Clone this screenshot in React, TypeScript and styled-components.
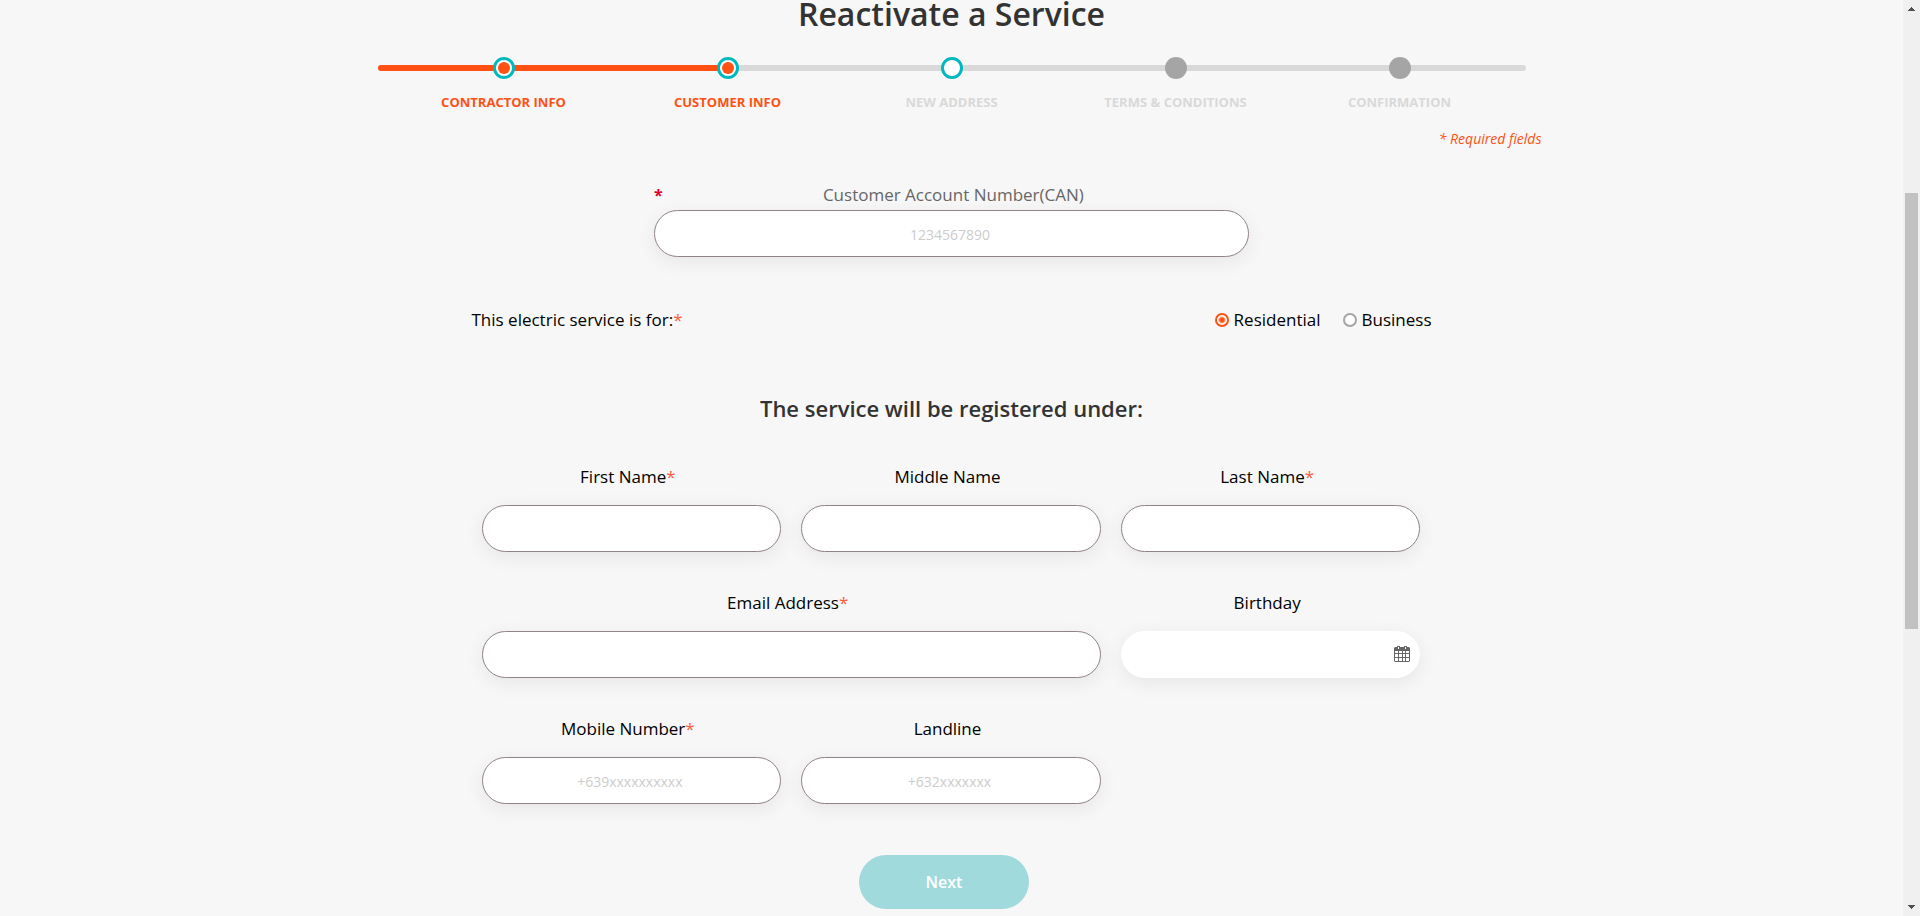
import React, { useState } from "react";
import styled, { createGlobalStyle, css } from "styled-components";

const colors = {
  page: "#f7f7f7",
  orange: "#ff5113",
  teal: "#00b8be",
  track: "#d9d9d9",
  marker: "#a5a5a5",
  border: "#918286",
};

const GlobalStyle = createGlobalStyle`
  *, *::before, *::after { box-sizing: border-box; }
  body {
    margin: 0;
    background: ${colors.page};
    color: #000;
    font: 400 17px/24px "Open Sans", "Noto Sans", sans-serif;
  }
  input, button { font-family: inherit; }
`;

const Shell = styled.div`
  display: grid;
  grid-template-columns: minmax(0, 1fr) 17px;
  min-height: 100vh;
`;

const Page = styled.main`
  width: 100%;
  max-width: 1180px;
  margin: 0 auto;
`;

const Title = styled.h1`
  margin: 0 0 29px;
  color: #333;
  font-size: 32px;
  font-weight: 600;
  line-height: 28px;
  text-align: center;
`;

const Progress = styled.nav`
  display: grid;
  margin: 0 16px;
`;

const Track = styled.div`
  grid-area: 1 / 1;
  height: 6px;
  margin-top: 8px;
  overflow: hidden;
  border-radius: 3px;
  background: ${colors.track};
`;

const TrackFill = styled.div`
  height: 100%;
  background: ${colors.orange};
`;

const StepList = styled.ol`
  grid-area: 1 / 1;
  display: grid;
  grid-template-columns: repeat(5, 1fr);
  z-index: 1;
  margin: 0;
  padding: 0 14px;
  list-style: none;
`;

type StepState = "done" | "current" | "todo";

const Step = styled.li<{ $state: StepState }>`
  display: flex;
  flex-direction: column;
  align-items: center;
  gap: 13px;
  color: ${(p) => (p.$state === "done" ? colors.orange : colors.track)};
  font-size: 13px;
  font-weight: 700;
  line-height: 20px;
  text-transform: uppercase;
`;

const Marker = styled.span<{ $state: StepState }>`
  display: grid;
  place-items: center;
  width: 22px;
  height: 22px;
  border: 3px solid ${(p) => (p.$state === "todo" ? colors.marker : colors.teal)};
  border-radius: 50%;
  background: ${(p) => (p.$state === "todo" ? colors.marker : "#fff")};
  ${(p) =>
    p.$state === "done" &&
    css`
      &::after {
        content: "";
        width: 12px;
        height: 12px;
        border-radius: 50%;
        background: ${colors.orange};
      }
    `}
`;

const RequiredNote = styled.p`
  margin: 17px 0 34px;
  color: ${colors.orange};
  font-size: 14px;
  font-style: italic;
  line-height: 20px;
  text-align: right;
`;

const Star = styled.span`
  color: #ff5a3c;
`;

const AccountField = styled.div`
  max-width: 595px;
  margin: 0 auto;
`;

const AccountLabel = styled.label`
  display: flex;
  margin-bottom: 3px;
  color: #666;
`;

const AccountStar = styled.span`
  color: #e4002b;
  font-size: 16px;
  font-weight: 700;
`;

const AccountText = styled.span`
  flex: 1;
  padding-right: 5px;
  text-align: center;
`;

const TextInput = styled.input<{ $plain?: boolean }>`
  display: block;
  width: 100%;
  height: 47px;
  padding: 2px 18px 0 15px;
  border: 1px solid ${(p) => (p.$plain ? "#fff" : colors.border)};
  border-radius: 24px;
  background: #fff;
  box-shadow: 0 5px 20px rgba(0, 0, 0, 0.07);
  color: #333;
  font-size: 14px;
  text-align: center;
  outline-color: ${colors.teal};
  &::placeholder {
    color: #ccc;
    opacity: 1;
  }
`;

const Form = styled.form`
  max-width: 960px;
  margin: 0 auto;
`;

const ServiceType = styled.div`
  display: flex;
  justify-content: space-between;
  margin: 51px 0 61px;
`;

const RadioGroup = styled.div`
  display: flex;
  gap: 22px;
`;

const RadioLabel = styled.label`
  display: flex;
  align-items: center;
  gap: 5px;
`;

const Radio = styled.input`
  appearance: none;
  width: 14px;
  height: 14px;
  margin: 0;
  border: 2px solid ${colors.marker};
  border-radius: 50%;
  background: #fff;
  &:checked {
    border-color: ${colors.orange};
    background: radial-gradient(circle, ${colors.orange} 2px, #fff 4px);
  }
`;

const SectionTitle = styled.h2`
  margin: 0 0 42px;
  color: #333;
  font-size: 22px;
  font-weight: 600;
  line-height: 30px;
  text-align: center;
`;

const Fields = styled.div`
  display: grid;
  grid-template-columns: repeat(3, minmax(0, 1fr));
  gap: 39px 20px;
  padding: 0 11px 0 10px;
`;

const FieldBox = styled.div<{ $span: number }>`
  grid-column: span ${(p) => p.$span};
`;

const FieldLabel = styled.label`
  display: block;
  margin-bottom: 16px;
  padding-right: 7px;
  text-align: center;
`;

const DateBox = styled.div`
  position: relative;
`;

const CalendarButton = styled.button`
  position: absolute;
  top: 15px;
  right: 10px;
  width: 16px;
  height: 16px;
  padding: 0;
  border: 0;
  background: none;
  svg { display: block; }
`;

const Actions = styled.div`
  display: flex;
  justify-content: center;
  margin-top: 51px;
  padding-right: 15px;
`;

const NextButton = styled.button`
  width: 170px;
  height: 54px;
  border: 0;
  border-radius: 27px;
  background: #a0dadd;
  color: #fff;
  font-size: 16px;
  font-weight: 600;
`;

const ScrollRail = styled.aside`
  position: sticky;
  top: 0;
  display: flex;
  flex-direction: column;
  align-items: center;
  height: 100vh;
  background: #f0f0f0;
`;

const ScrollArrow = styled.svg`
  flex: none;
  width: 17px;
  height: 17px;
  fill: #505050;
`;

const ScrollSpace = styled.div<{ $grow: number }>`
  flex: ${(p) => p.$grow} 0 0;
`;

const ScrollThumb = styled.div`
  flex: 436 0 0;
  width: 13px;
  background: #c1c1c1;
`;

const steps: { label: string; state: StepState }[] = [
  { label: "Contractor Info", state: "done" },
  { label: "Customer Info", state: "done" },
  { label: "New Address", state: "current" },
  { label: "Terms & Conditions", state: "todo" },
  { label: "Confirmation", state: "todo" },
];

const CalendarIcon = () => (
  <svg width="16" height="16" viewBox="0 0 16 16" aria-hidden="true">
    <path
      fill="#666"
      fillRule="evenodd"
      d="M1 1h2V0h3v1h4V0h3v1h2l1 1v13l-1 1H1l-1-1V2zM1 5v2h3V5zM5 5v2h3V5zM9 5v2h2V5zM12 5v2h3V5zM1 8v3h3V8zM5 8v3h3V8zM9 8v3h2V8zM12 8v3h3V8zM1 12v3h3v-3zM5 12v3h3v-3zM9 12v3h2v-3zM12 12v3h3v-3zM4 1v2h1V1zM11 1v2h1V1z"
    />
  </svg>
);

type FieldProps = {
  id: string;
  label: string;
  required?: boolean;
  span?: number;
  placeholder?: string;
  type?: string;
};

const Field = ({ id, label, required, span = 1, placeholder, type = "text" }: FieldProps) => (
  <FieldBox $span={span}>
    <FieldLabel htmlFor={id}>
      {label}
      {required && <Star>*</Star>}
    </FieldLabel>
    <TextInput id={id} type={type} placeholder={placeholder} required={required} />
  </FieldBox>
);

export default function App() {
  const [service, setService] = useState("Residential");
  const done = steps.filter((s) => s.state === "done").length;

  return (
    <>
      <GlobalStyle />
      <Shell>
        <Page>
          <Title>Reactivate a Service</Title>
          <Progress aria-label="Progress">
            <Track>
              <TrackFill style={{ width: `${((done - 0.5) / steps.length) * 100}%` }} />
            </Track>
            <StepList>
              {steps.map((s) => (
                <Step key={s.label} $state={s.state}>
                  <Marker $state={s.state} />
                  {s.label}
                </Step>
              ))}
            </StepList>
          </Progress>
          <RequiredNote>* Required fields</RequiredNote>

          <Form onSubmit={(e) => e.preventDefault()}>
            <AccountField>
              <AccountLabel htmlFor="can">
                <AccountStar>*</AccountStar>
                <AccountText>Customer Account Number(CAN)</AccountText>
              </AccountLabel>
              <TextInput id="can" type="text" placeholder="1234567890" required />
            </AccountField>

            <ServiceType role="radiogroup" aria-labelledby="service-type">
              <span id="service-type">
                This electric service is for:<Star>*</Star>
              </span>
              <RadioGroup>
                {["Residential", "Business"].map((name) => (
                  <RadioLabel key={name}>
                    <Radio
                      type="radio"
                      name="service"
                      checked={service === name}
                      onChange={() => setService(name)}
                    />
                    {name}
                  </RadioLabel>
                ))}
              </RadioGroup>
            </ServiceType>

            <SectionTitle>The service will be registered under:</SectionTitle>
            <Fields>
              <Field id="first-name" label="First Name" required />
              <Field id="middle-name" label="Middle Name" />
              <Field id="last-name" label="Last Name" required />
              <Field id="email" label="Email Address" type="email" span={2} required />
              <FieldBox $span={1}>
                <FieldLabel htmlFor="birthday">Birthday</FieldLabel>
                <DateBox>
                  <TextInput id="birthday" type="text" $plain />
                  <CalendarButton type="button" aria-label="Choose date">
                    <CalendarIcon />
                  </CalendarButton>
                </DateBox>
              </FieldBox>
              <Field id="mobile" label="Mobile Number" type="tel" placeholder="+639xxxxxxxxxx" required />
              <Field id="landline" label="Landline" type="tel" placeholder="+632xxxxxxx" />
            </Fields>
            <Actions>
              <NextButton type="submit">Next</NextButton>
            </Actions>
          </Form>
        </Page>
        <ScrollRail aria-hidden="true">
          <ScrollArrow viewBox="0 0 17 17" shapeRendering="crispEdges">
            <path d="M8 7h1v1h1v1h1v1h1v1H5v-1h1V9h1V8h1z" />
          </ScrollArrow>
          <ScrollSpace $grow={176} />
          <ScrollThumb />
          <ScrollSpace $grow={270} />
          <ScrollArrow viewBox="0 0 17 17" shapeRendering="crispEdges">
            <path d="M5 6h7v1h-1v1h-1v1H9v1H8V9H7V8H6V7H5z" />
          </ScrollArrow>
        </ScrollRail>
      </Shell>
    </>
  );
}
